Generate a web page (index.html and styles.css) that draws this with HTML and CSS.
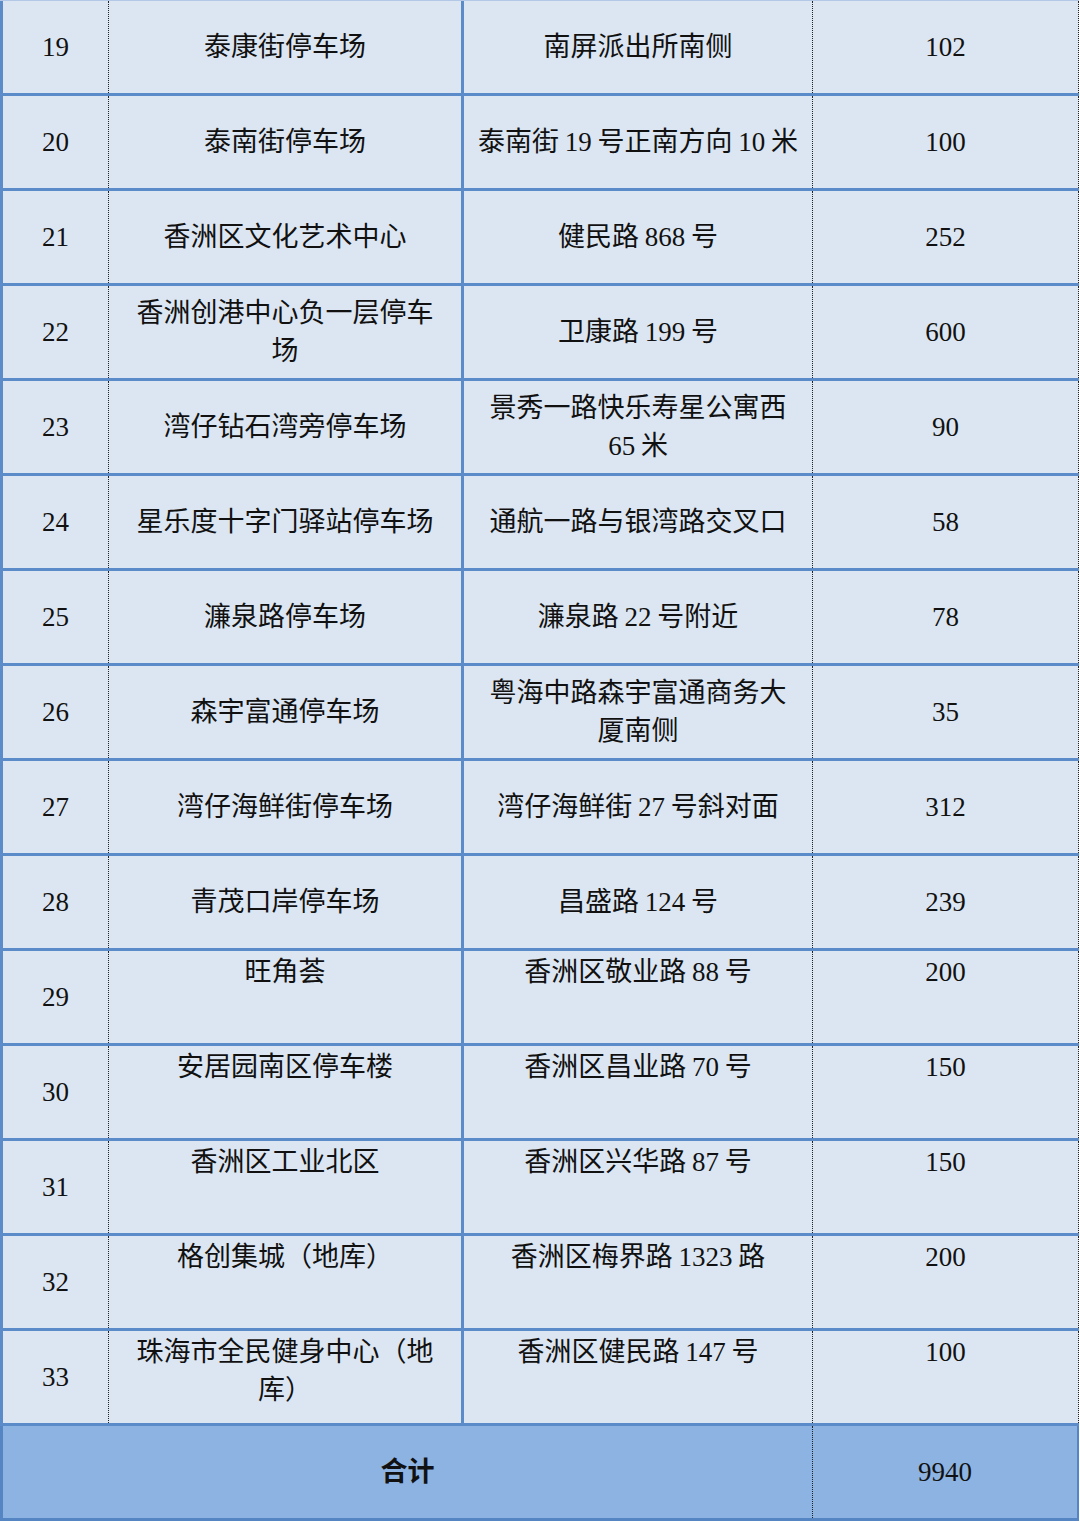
FILE: index.html
```html
<!DOCTYPE html>
<html lang="zh-CN">
<head>
<meta charset="utf-8">
<title>停车场列表</title>
<link rel="stylesheet" href="styles.css">
</head>
<body>
<div class="sheet">
  <div class="row"><div class="c c1">19</div><div class="c c2">泰康街停车场</div><div class="c c3">南屏派出所南侧</div><div class="c c4">102</div></div>
  <div class="row"><div class="c c1">20</div><div class="c c2">泰南街停车场</div><div class="c c3">泰南街 19 号正南方向 10 米</div><div class="c c4">100</div></div>
  <div class="row"><div class="c c1">21</div><div class="c c2">香洲区文化艺术中心</div><div class="c c3">健民路 868 号</div><div class="c c4">252</div></div>
  <div class="row"><div class="c c1">22</div><div class="c c2">香洲创港中心负一层停车场</div><div class="c c3">卫康路 199 号</div><div class="c c4">600</div></div>
  <div class="row"><div class="c c1">23</div><div class="c c2">湾仔钻石湾旁停车场</div><div class="c c3">景秀一路快乐寿星公寓西 65 米</div><div class="c c4">90</div></div>
  <div class="row"><div class="c c1">24</div><div class="c c2">星乐度十字门驿站停车场</div><div class="c c3">通航一路与银湾路交叉口</div><div class="c c4">58</div></div>
  <div class="row"><div class="c c1">25</div><div class="c c2">濂泉路停车场</div><div class="c c3">濂泉路 22 号附近</div><div class="c c4">78</div></div>
  <div class="row"><div class="c c1">26</div><div class="c c2">森宇富通停车场</div><div class="c c3">粤海中路森宇富通商务大厦南侧</div><div class="c c4">35</div></div>
  <div class="row"><div class="c c1">27</div><div class="c c2">湾仔海鲜街停车场</div><div class="c c3">湾仔海鲜街 27 号斜对面</div><div class="c c4">312</div></div>
  <div class="row"><div class="c c1">28</div><div class="c c2">青茂口岸停车场</div><div class="c c3">昌盛路 124 号</div><div class="c c4">239</div></div>
  <div class="row top"><div class="c c1">29</div><div class="c c2">旺角荟</div><div class="c c3">香洲区敬业路 88 号</div><div class="c c4">200</div></div>
  <div class="row top"><div class="c c1">30</div><div class="c c2">安居园南区停车楼</div><div class="c c3">香洲区昌业路 70 号</div><div class="c c4">150</div></div>
  <div class="row top"><div class="c c1">31</div><div class="c c2">香洲区工业北区</div><div class="c c3">香洲区兴华路 87 号</div><div class="c c4">150</div></div>
  <div class="row top"><div class="c c1">32</div><div class="c c2">格创集城（地库）</div><div class="c c3">香洲区梅界路 1323 路</div><div class="c c4">200</div></div>
  <div class="row top"><div class="c c1">33</div><div class="c c2">珠海市全民健身中心（地库）</div><div class="c c3">香洲区健民路 147 号</div><div class="c c4">100</div></div>
  <div class="row total"><div class="c cspan">合计</div><div class="c c4">9940</div></div>
</div>
</body>
</html>
```

FILE: styles.css
```css
html, body {
  margin: 0;
  padding: 0;
  background: #ffffff;
}

body {
  font-family: "Liberation Serif", "Noto Sans CJK SC", serif;
  font-size: 27px;
  color: #111111;
}

.sheet {
  width: 1079px;
  border-top: 1px solid #b3c8e6;
}

.row {
  display: grid;
  grid-template-columns: 106px 355px 349px 266px;
  height: 95px;
  box-sizing: border-box;
  border-left: 3px solid #5b8bc8;
  border-bottom: 3px solid #5b8bc8;
  background: #dce6f2;
}

.c {
  box-sizing: border-box;
  display: flex;
  align-items: center;
  justify-content: center;
  text-align: center;
  line-height: 38px;
}

.c1 {
  border-right: 1px dotted #222222;
}

.c2 {
  border-right: 3px solid #5b8bc8;
  padding: 0 20px;
}

.c3 {
  border-right: 1px dotted #222222;
  padding: 0 13px;
  word-spacing: -1px;
}

.c4 {
  border-right: 1px dotted #222222;
}

.row.top .c2,
.row.top .c3,
.row.top .c4 {
  align-items: flex-start;
  padding-top: 2px;
}

.row.total {
  grid-template-columns: 810px 266px;
  background: #8db3e2;
  border-left: 3px solid #5585c3;
  border-bottom: 3px solid #5585c3;
}

.row.total .c4 {
  border-right: 2px solid #5585c3;
}

.cspan {
  border-right: 1px dotted #222222;
  font-weight: bold;
  padding-right: 0;
}
```
